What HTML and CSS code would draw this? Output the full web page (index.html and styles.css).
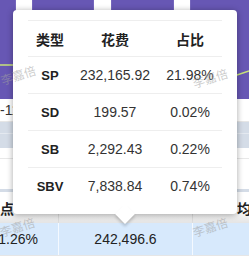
FILE: index.html
```
<!DOCTYPE html>
<html lang="zh">
<head>
<meta charset="utf-8">
<link rel="stylesheet" href="styles.css">
</head>
<body>
<div class="page">
  <div class="chart">
    <i class="stripe s1"></i>
    <i class="stripe s2"></i>
    <i class="stripe s3"></i>
    <svg class="trend" width="249" height="99" viewBox="0 0 249 99">
      <polyline points="0,65 60,65 130,70 200,76 237,75 249,71" fill="none" stroke="#c8e37a" stroke-width="1.5"/>
    </svg>
  </div>
  <div class="r r-date"><span>-11-20</span></div>
  <div class="r r-gray1"></div>
  <div class="r r-gray2"></div>
  <div class="r r-white1"></div>
  <div class="r r-white2"></div>
  <div class="r r-band"></div>
  <div class="r r-head">
    <div class="c c1"><span class="h-left">点</span></div>
    <div class="c c2"></div>
    <div class="c c3"><span class="h-right">均</span></div>
  </div>
  <div class="r r-blue">
    <div class="c c1 num-right">21.26%</div>
    <div class="c c2 num-center">242,496.6</div>
    <div class="c c3"></div>
  </div>
  <div class="r r-after"></div>

  <div class="tooltip">
    <div class="tt-table">
      <div class="tt-row tt-head">
        <div>类型</div><div>花费</div><div>占比</div>
      </div>
      <div class="tt-row">
        <div class="type">SP</div><div>232,165.92</div><div>21.98%</div>
      </div>
      <div class="tt-row">
        <div class="type">SD</div><div>199.57</div><div>0.02%</div>
      </div>
      <div class="tt-row">
        <div class="type">SB</div><div>2,292.43</div><div>0.22%</div>
      </div>
      <div class="tt-row tt-last">
        <div class="type">SBV</div><div>7,838.84</div><div>0.74%</div>
      </div>
    </div>
  </div>

  <span class="wm wm1">李嘉倍</span>
  <span class="wm wm2">李嘉倍</span>
  <span class="wm wm3">李嘉倍</span>
  <span class="wm wm4">李嘉倍</span>
</div>
</body>
</html>
```

FILE: styles.css
```
html, body {
  margin: 0;
  padding: 0;
  background: #fff;
}
body {
  font-family: "Liberation Sans", "Noto Sans CJK SC", sans-serif;
  color: #333;
}
.page {
  position: relative;
  width: 249px;
  height: 268px;
  overflow: hidden;
  display: flex;
  flex-direction: column;
}
.chart {
  position: relative;
  height: 99px;
  flex: none;
  background: #6757b4;
  display: flex;
}
.stripe {
  display: block;
  height: 100%;
  background: #fff;
  box-shadow: 0 0 1px #bdb4e6;
}
.s1 { margin-left: 16px; width: 16px; }
.s2 { margin-left: 62px; width: 17px; }
.s3 { margin-left: 63px; width: 16px; }
.trend {
  position: absolute;
  left: 0;
  top: 0;
}
.r {
  flex: none;
  box-sizing: border-box;
}
.r-date {
  height: 23px;
  border-bottom: 1px solid #e6e6e6;
  font-size: 14px;
  line-height: 22px;
  white-space: nowrap;
}
.r-gray1 {
  height: 12px;
  background: #d4dce7;
  border-bottom: 1px solid #e4e9f0;
}
.r-gray2 {
  height: 14px;
  background: #d4dce7;
}
.r-white1 {
  height: 11px;
  border-bottom: 1px solid #e8e8e8;
}
.r-white2 {
  height: 30px;
}
.r-band {
  height: 3px;
  background: #d4dce7;
}
.r-head {
  height: 31px;
  display: grid;
  grid-template-columns: 58px 134px 1fr;
  background: linear-gradient(#fff 55%, #e4e4e4);
}
.r-head .c {
  display: flex;
  align-items: center;
}
.r-head .c2, .r-head .c3 {
  border-left: 1px solid #dcdcdc;
}
.h-left {
  font-family: "Noto Sans CJK SC", sans-serif;
  font-weight: bold;
  font-size: 14px;
  color: #222;
}
.h-right {
  font-family: "Noto Sans CJK SC", sans-serif;
  font-weight: bold;
  font-size: 14px;
  color: #222;
  margin-left: 44px;
}
.r-blue {
  height: 32px;
  display: grid;
  grid-template-columns: 58px 134px 1fr;
  background: #d7e9fc;
  font-size: 14px;
  color: #222;
}
.r-blue .c {
  display: flex;
  align-items: center;
}
.r-blue .c2, .r-blue .c3 {
  border-left: 1px solid #f4f9ff;
}
.num-right {
  justify-content: flex-end;
  padding-right: 20px;
  white-space: nowrap;
}
.num-center {
  justify-content: center;
}
.r-after {
  height: 1px;
  background: #e6e6e6;
}

.tooltip {
  position: absolute;
  left: 13px;
  top: 10px;
  width: 194px;
  padding: 10px 15px;
  background: #fff;
  border-radius: 4px;
  box-shadow: 0 1px 6px rgba(0, 0, 0, 0.35);
}
.tooltip::after {
  content: "";
  position: absolute;
  left: 105px;
  bottom: -7px;
  width: 14px;
  height: 14px;
  background: #fff;
  transform: rotate(45deg);
  box-shadow: 2px 2px 3px rgba(0, 0, 0, 0.18);
}
.tt-table {
  position: relative;
  z-index: 1;
  border-top: 1px solid #eee;
}
.tt-row {
  display: grid;
  grid-template-columns: 44px 86px 64px;
  align-items: center;
  text-align: center;
  box-sizing: border-box;
  height: 37px;
  border-bottom: 1px solid #eee;
  font-size: 14px;
  color: #333;
  white-space: nowrap;
}
.tt-head {
  height: 36px;
  font-family: "Noto Sans CJK SC", sans-serif;
  font-weight: bold;
  color: #222;
}
.tt-last {
  height: 36px;
  border-bottom: none;
}
.type {
  font-weight: bold;
  font-size: 13px;
  color: #222;
}

.wm {
  position: absolute;
  z-index: 5;
  font-family: "Noto Sans CJK SC", sans-serif;
  font-size: 12px;
  color: rgba(160, 160, 160, 0.55);
  transform: rotate(-18deg);
  white-space: nowrap;
  pointer-events: none;
}
.wm1 { left: 0px; top: 66px; }
.wm2 { left: 192px; top: 69px; }
.wm3 { left: -1px; top: 218px; }
.wm4 { left: 192px; top: 218px; }
```
